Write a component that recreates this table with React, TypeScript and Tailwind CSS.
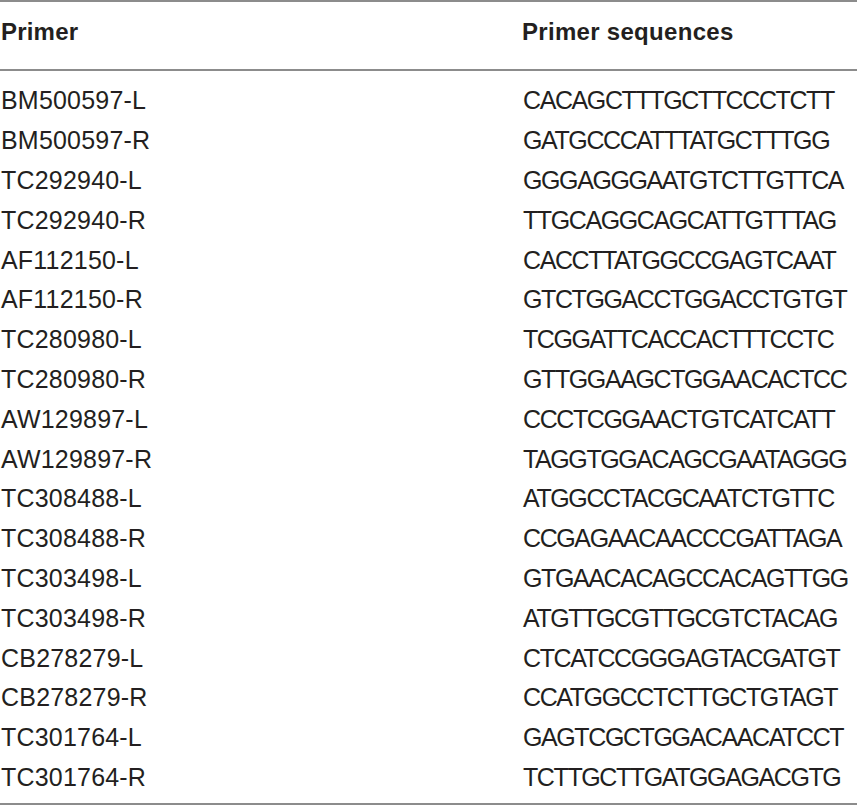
import React from "react";

const rows: [string, string][] = [
  ["BM500597-L", "CACAGCTTTGCTTCCCTCTT"],
  ["BM500597-R", "GATGCCCATTTATGCTTTGG"],
  ["TC292940-L", "GGGAGGGAATGTCTTGTTCA"],
  ["TC292940-R", "TTGCAGGCAGCATTGTTTAG"],
  ["AF112150-L", "CACCTTATGGCCGAGTCAAT"],
  ["AF112150-R", "GTCTGGACCTGGACCTGTGT"],
  ["TC280980-L", "TCGGATTCACCACTTTCCTC"],
  ["TC280980-R", "GTTGGAAGCTGGAACACTCC"],
  ["AW129897-L", "CCCTCGGAACTGTCATCATT"],
  ["AW129897-R", "TAGGTGGACAGCGAATAGGG"],
  ["TC308488-L", "ATGGCCTACGCAATCTGTTC"],
  ["TC308488-R", "CCGAGAACAACCCGATTAGA"],
  ["TC303498-L", "GTGAACACAGCCACAGTTGG"],
  ["TC303498-R", "ATGTTGCGTTGCGTCTACAG"],
  ["CB278279-L", "CTCATCCGGGAGTACGATGT"],
  ["CB278279-R", "CCATGGCCTCTTGCTGTAGT"],
  ["TC301764-L", "GAGTCGCTGGACAACATCCT"],
  ["TC301764-R", "TCTTGCTTGATGGAGACGTG"],
];

export default function App() {
  return (
    <div
      className="w-[857px] h-[805px] bg-white text-[#231f20] flex flex-col"
      style={{ fontFamily: '"Liberation Sans", Arial, sans-serif' }}
    >
      <div className="border-t-2 border-[#8c8c8c] h-[69px] pb-[7px] flex items-center">
        <div className="w-[522px] pl-[1px] text-[24px] font-bold tracking-[0.2px]">Primer</div>
        <div className="text-[24px] font-bold tracking-[0.3px]">Primer sequences</div>
      </div>
      <div className="border-t-2 border-[#8c8c8c]" />
      <div className="pt-[10px] flex-1 flex flex-col">
        {rows.map(([p, s]) => (
          <div key={p} className="h-[39.8px] flex items-center text-[25px] leading-none">
            <div className="w-[523px] pl-[1px] tracking-[0.2px]">{p}</div>
            <div className="tracking-[-1.4px]">{s}</div>
          </div>
        ))}
      </div>
      <div className="border-t-2 border-[#8c8c8c]" />
    </div>
  );
}
